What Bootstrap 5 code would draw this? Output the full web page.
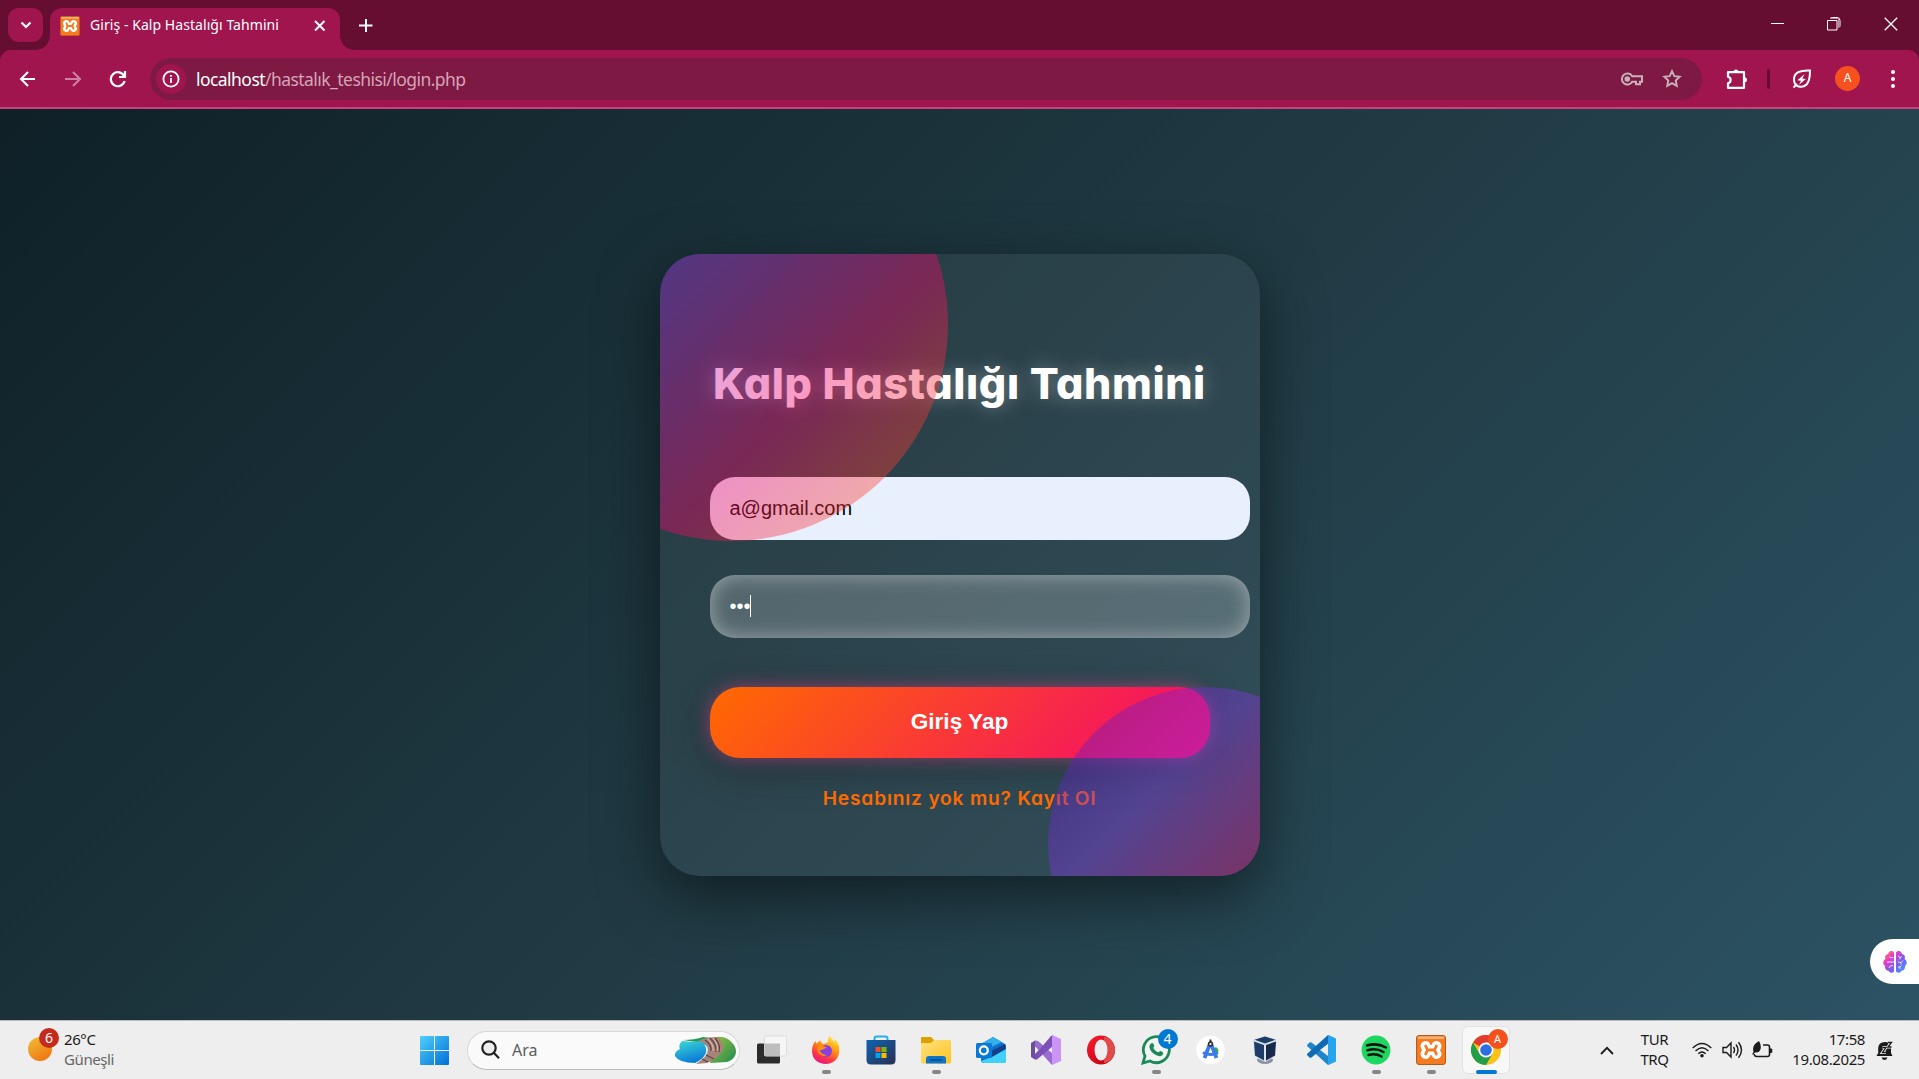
<!DOCTYPE html>
<html lang="tr">
<head>
<meta charset="utf-8">
<title>Giriş - Kalp Hastalığı Tahmini</title>
<link href="https://cdn.jsdelivr.net/npm/bootstrap@5.3.0/dist/css/bootstrap.min.css" rel="stylesheet">
<style>
html,body{height:1079px;overflow:hidden}
body{font-family:"Noto Sans","Open Sans",sans-serif;color:#1b1b1b;line-height:1.2}
svg{display:block;flex:none}
/* browser chrome */
.strip{height:50px;background:#660e32;padding-left:8px}
.tabmenu{width:35px;height:34px;border-radius:11px;background:#a1154f;margin:8px 7px 0 0}
.tab{width:290px;height:42px;margin-top:8px;background:#a1154f;border-radius:12px 12px 0 0;padding:0 14px 7px 10px;color:#fff;position:relative}
.tab::before,.tab::after{content:"";position:absolute;bottom:0;width:14px;height:14px}
.tab::before{left:-14px;background:radial-gradient(circle at 0 0,transparent 13.5px,#a1154f 14px)}
.tab::after{right:-14px;background:radial-gradient(circle at 100% 0,transparent 13.5px,#a1154f 14px)}
.tabtitle{font-size:14px;margin-left:10px;letter-spacing:.06px;white-space:nowrap}
.bar{background:#660e32;height:59px}
.barin{background:#a1154f;height:59px;border-radius:11px 11px 0 0;border-bottom:2px solid #c4447c;padding:0 17px 0 17px}
.omni{width:1552px;height:42px;border-radius:21px;background:#7d1942;padding:0 20px 0 6px;color:#fff}
.infoc{width:30px;height:30px;border-radius:50%;background:#a1154f}
.url{font-size:17.5px;margin-left:10px;white-space:nowrap;letter-spacing:-.55px;padding-top:1px}
.url span{color:#d7a3b8}
.avatar{width:25px;height:25px;border-radius:50%;background:#f4511e;color:#fff;font-size:12px}
.vsep{width:3px;height:20px;background:#660e32;border-radius:2px}
/* page */
.stage{height:911px;background:linear-gradient(135deg,#0f2027,#203a43,#2c5364);position:relative}
.panel{width:600px;height:622px;border-radius:40px;background:rgba(255,255,255,.055);box-shadow:0 20px 60px rgba(0,0,0,.5);padding:101px 50px 0;overflow:hidden;position:relative}
.orb{position:absolute;border-radius:50%;opacity:.4}
.orb-a{width:434px;height:434px;left:-146px;top:-147px;background:linear-gradient(135deg,#4a14b0,#9033ea,#f5046c,#ff6a00)}
.orb-b{width:314px;height:314px;left:388px;top:433px;background:linear-gradient(135deg,#4506ac,#8838ea,#f5046c,#ff6a00)}
.poppy{font-family:Inter,"Open Sans",sans-serif;font-feature-settings:"cv11","ss03"}
.brand{font-size:43px;font-weight:800;color:#fff;text-shadow:0 0 20px rgba(255,255,255,.35);line-height:56px;margin:0 -20px 66px;white-space:nowrap;letter-spacing:.6px}
.field{width:540px;height:63px;border-radius:25px;padding:0 20px;font:20px "Liberation Sans",sans-serif;line-height:63px;display:flex;align-items:center}
.f-mail{background:#e8f0fe;color:#000;margin-bottom:35px;border:0}
.f-pass{background:rgba(255,255,255,.2);box-shadow:inset 0 0 20px rgba(255,255,255,.42);color:#fff;margin-bottom:49px}
.caret{width:1px;height:22px;background:#fff;margin-left:-1px}
.go{height:71px;border-radius:30px;border:0;width:500px;background:linear-gradient(135deg,#ff6a00,#f5145f 85%,#f5085f);color:#fff;font:bold 22.6px "Liberation Sans",sans-serif;box-shadow:0 0 18px rgba(255,70,150,.5),0 10px 40px rgba(0,0,0,.25)}
.reg{color:#ff6a00;font-weight:600;font-size:19.2px;margin-top:28px;line-height:24px;text-decoration:none;white-space:nowrap;letter-spacing:.8px}
.brainpill{position:absolute;right:0;bottom:36px;width:49px;height:45px;border-radius:23px 0 0 23px;background:#fff;padding-left:13px}
/* taskbar */
.task{height:59px;background:#eee;border-top:1px solid #b9bcbd}
.wx{width:407px;padding-left:28px}
.sun{width:24px;height:24px;border-radius:50%;background:linear-gradient(150deg,#eec238,#f26a0c);position:relative;margin-top:-2px}
.bub{position:absolute;width:20px;height:20px;border-radius:50%;color:#fff;font-size:14px;line-height:20px;text-align:center}
.t15{font-size:15px;line-height:20px;white-space:nowrap;letter-spacing:-.4px;margin-top:-2px}
.cell{width:55px;height:58px;position:relative}
.cell i{position:absolute;left:23px;bottom:5px;width:9px;height:4px;border-radius:2px;background:#868686}
.find{width:273px;height:39px;border-radius:20px;background:#fafafa;border:1px solid #d8d8d8;border-bottom-color:#bbb;margin:0 3.5px 0 5px;padding:0 2px 0 13px}
.tile{position:absolute;left:3.5px;top:5px;width:48px;height:48px;border-radius:6px;background:#f8f8f8;border:1px solid #e2e2e2}
</style>
<script src="https://cdn.jsdelivr.net/npm/bootstrap@5.3.0/dist/js/bootstrap.bundle.min.js"></script>
</head>
<body>
<svg width="0" height="0" class="position-absolute"><defs>
<linearGradient id="win" x1="0" y1="0" x2="1" y2="1"><stop stop-color="#4fd0fb"/><stop offset="1" stop-color="#006ed6"/></linearGradient>
<linearGradient id="ff" x1=".8" y1="0" x2=".3" y2="1"><stop stop-color="#fff44f"/><stop offset=".4" stop-color="#ff980e"/><stop offset=".75" stop-color="#ff3647"/><stop offset="1" stop-color="#e31587"/></linearGradient>
<linearGradient id="st" x1="0" y1="0" x2="1" y2="1"><stop stop-color="#0f63b0"/><stop offset="1" stop-color="#273055"/></linearGradient>
<linearGradient id="fo" x1="0" y1="0" x2="1" y2="1"><stop stop-color="#ffe184"/><stop offset="1" stop-color="#ffc31c"/></linearGradient>
<linearGradient id="op" x1="0" y1="0" x2="1" y2="1"><stop stop-color="#ff1b2d"/><stop offset="1" stop-color="#b30012"/></linearGradient>
<linearGradient id="br" x1="0" y1="0" x2="1" y2="1"><stop stop-color="#ff9a3c"/><stop offset=".3" stop-color="#ea3cc4"/><stop offset=".6" stop-color="#7a5cf0"/><stop offset="1" stop-color="#2fa8ff"/></linearGradient>
<linearGradient id="sea" x1="0" y1="0" x2=".4" y2="1"><stop stop-color="#3fe0d6"/><stop offset="1" stop-color="#0b7cd6"/></linearGradient>
<linearGradient id="gr" x1="0" y1="0" x2="1" y2="1"><stop stop-color="#9cc63c"/><stop offset="1" stop-color="#1f8a52"/></linearGradient>
<symbol id="xampp" viewBox="0 0 30 30"><rect x=".5" y=".5" width="29" height="29" rx="2.5" fill="#f57a20" stroke="#b5591a"/><path d="M2 1.500h26v2.500H2z" fill="#ffb27a"/><g fill="none" stroke-linecap="round" stroke-linejoin="round"><path d="M9.500 11 11.200 15 9.500 19M20.500 11 18.800 15 20.500 19M11.200 15h7.600" stroke="#fff" stroke-width="10"/><path d="M9.700 11 11.500 15 9.700 19M20.300 11 18.500 15 20.300 19M11.500 15h7" stroke="#f57a20" stroke-width="2.800"/></g></symbol>
</defs></svg>

<header>
<div class="strip d-flex align-items-start">
 <div class="tabmenu d-flex align-items-center justify-content-center"><svg width="12" height="8" fill="none" stroke="#fff" stroke-width="2.200"><path d="M1.500 1.500 6 6l4.500-4.500"/></svg></div>
 <div class="tab d-flex align-items-center">
  <svg width="20" height="20"><use href="#xampp"/></svg>
  <span class="tabtitle">Giriş - Kalp Hastalığı Tahmini</span>
  <svg class="ms-auto" width="12" height="12" stroke="#fff" stroke-width="2"><path d="m1 1 9.500 9.500M10.500 1 1 10.500"/></svg>
 </div>
 <svg style="margin:19px 0 0 19px" width="14" height="14" stroke="#fff" stroke-width="2"><path d="M7 0v13M0 6.500h13.500"/></svg>
 <div class="ms-auto d-flex" style="padding:17px 21px 0 0;gap:43px">
  <svg width="13" height="14" stroke="#fff"><path d="M0 6.500h13"/></svg>
  <svg width="14" height="14" fill="none" stroke="#fff"><path d="M.5 3.500h9.500v9.500H.5zM3 1.500q1-1 2.500-1H10q3 0 3 3v5q0 1.500-1 2"/><path d="M3 1.500h8.500v9" stroke="#c58aa2"/></svg>
  <svg width="14" height="14" stroke="#fff" stroke-width="1.300"><path d="m.7.700 12.500 12.500M13.200.700.7 13.200"/></svg>
 </div>
</div>
<div class="bar"><div class="barin d-flex align-items-center">
 <svg width="21" height="18" fill="none" stroke="#fff" stroke-width="2.100"><path d="M18 9H5M11 2 4 9l7 7"/></svg>
 <svg width="21" height="18" fill="none" stroke="#cd7fa0" stroke-width="2.100" style="margin-left:27px"><path d="M0 9h14M8 2l7 7-7 7"/></svg>
 <svg width="18" height="18" fill="none" stroke="#fff" stroke-width="2.200" style="margin:0 23px 0 23px"><path d="M15.300 6.500A7 7 0 1 0 15.600 11M16 1v6h-6"/></svg>
 <div class="omni d-flex align-items-center">
  <div class="infoc d-flex align-items-center justify-content-center"><svg width="18" height="18" fill="none" stroke="#fff" stroke-width="1.800"><circle cx="9" cy="9" r="7.600"/><path d="M9 8v5M9 5v1.800"/></svg></div>
  <div class="url">localhost<span>/hastalık_teshisi/login.php</span></div>
  <svg class="ms-auto" width="24" height="16" fill="none" stroke="#c9b0bb" stroke-width="2"><path d="M12.200 5.300a5.500 5.500 0 1 0 0 5.400h3.800v2.500h4v-2.500h2V5.300z"/><circle cx="7.300" cy="8" r="2.800" fill="#c9b0bb" stroke="none"/></svg>
  <svg width="20" height="20" fill="none" stroke="#c9b0bb" stroke-width="1.900" style="margin-left:18px"><path d="m10 2.200 2.300 5 5.400.6-4 3.700 1.100 5.400L10 14.200l-4.800 2.700 1.100-5.400-4-3.700 5.400-.6z"/></svg>
 </div>
 <svg width="22" height="22" fill="none" stroke="#fff" stroke-width="2.200" style="margin-left:24px"><path d="M2 4.200h16v15.600H2v-4.600q2.600-.6 2.600-3.200T2 8.800z" stroke-linejoin="round"/><path d="M7.500 4a2.500 2.500 0 0 1 5 0zM18.500 9.300a2.500 2.500 0 0 1 0 5z" fill="#fff" stroke="none"/></svg>
 <div class="vsep" style="margin-left:19px"></div>
 <svg width="20" height="20" fill="none" stroke="#fff" stroke-width="2" style="margin-left:22px"><path d="M18 1.500C8 1 2 3.500 2 10.500c0 8 8.500 9 12.500 5 3-3 3.500-7 3.500-14zM5 15l-3.500 3.500"/><path d="m12.500 5-7 6.300 3.500.4-2 4 6.800-5.700-3.500-.6z" fill="#fff" stroke="none"/></svg>
 <div class="avatar d-flex align-items-center justify-content-center" style="margin-left:23px">A</div>
 <svg width="6" height="20" fill="#fff" class="ms-auto" style="margin-right:6px"><circle cx="3" cy="3" r="2"/><circle cx="3" cy="10" r="2"/><circle cx="3" cy="17" r="2"/></svg>
</div></div>
</header>

<main class="stage d-flex align-items-center justify-content-center">
 <div class="panel text-center">
  <h1 class="brand poppy">Kalp Hastalığı Tahmini</h1>
  <div class="field f-mail">a@gmail.com</div>
  <div class="field f-pass">•••<span class="caret"></span></div>
  <button class="go d-block">Giriş Yap</button>
  <a class="reg poppy d-block">Hesabınız yok mu? Kayıt Ol</a>
  <div class="orb orb-a"></div><div class="orb orb-b"></div>
 </div>
 <div class="brainpill d-flex align-items-center"><svg width="24" height="24" viewBox="0 0 24 24"><path d="M11 2.500C9 0 5.500 1 5 4 2 4.500 1.500 7 2.500 9-.5 11-.3 14.500 2 16c-.3 3 1.500 4.500 3.500 4.700C7 23.500 10 23 11 21.500zM13 2.500C15 0 18.500 1 19 4c3 .5 3.500 3 2.500 5 3 2 2.800 5.500.5 7 .3 3-1.500 4.500-3.500 4.700-1.500 2.800-4.500 2.300-5.500.8z" fill="url(#br)"/><path d="M4 12h7M6 6.500q1 2 4.500 1M6 18q0-2.500 4-2.500M15 6l2 1.500 2-1M17 7.500v2M15 12l3 .5 2-2M18 12.500v2M15 17l2 0 1.500-1.500M17 17v2" stroke="#fff" stroke-width=".8" fill="none"/></svg></div>
</main>

<footer class="task d-flex align-items-center">
 <div class="wx d-flex align-items-center">
  <div class="sun"><span class="bub" style="left:11px;top:-9px;background:#c42b1c">6</span></div>
  <div class="t15" style="margin-left:12px">26°C<br><span style="color:#666">Güneşli</span></div>
 </div>
 <div class="cell d-flex align-items-center justify-content-center"><svg width="29" height="29" fill="url(#win)"><path d="M1 0h13v14H0V1q0-1 1-1zM15 0h13q1 0 1 1v13H15zM0 15h14v14H1q-1 0-1-1zM15 15h14v13q0 1-1 1H15z"/></svg></div>
 <div class="find d-flex align-items-center">
  <svg width="20" height="20" fill="none" stroke="#222" stroke-width="2.200"><circle cx="8" cy="8" r="6.700" fill="#eee"/><path d="m12.800 12.800 5.200 5.500"/></svg>
  <span style="font-size:16px;color:#5c5c5c;margin-left:11px;padding-top:2px">Ara</span>
  <svg class="ms-auto" width="63" height="30"><path d="M40 3c8-4 18 2 21 9s-1 13-8 15l-17 1z" fill="url(#gr)"/><path d="M9 5q12 0 20-3l8 1-8 5z" fill="#1f9a57"/><path d="M8 6q14 2 22-1 6 8 2 13-4 8-11 10Q5 28 1 21q-1-4 5-7-2-4 2-8z" fill="url(#sea)"/><path d="M30 9q6 9-4 16l-6 4 4-1q11-6 11-15z" fill="#d9f5f7"/><path d="M24 6q8-4 20-4 9 10 3 16-5 6-14 10l-11 1q12-8 12-14 0-7-10-9z" fill="#a88478"/><path d="M31 5q7 5 6 11M36 3q7 7 6 14M41 3q6 7 4 14M28 24l6 3M32 20l8 4" stroke="#5e4652" stroke-width="1.300" fill="none"/><path d="M34 4q6 6 5 12M39 3q6 7 4 13" stroke="#e5c4a4" stroke-width="1" fill="none"/></svg>
 </div>
 <div class="cell d-flex align-items-center justify-content-center"><svg width="30" height="30" style="margin-left:1px"><rect x="0" y="8.500" width="23" height="20" rx="1.500" fill="#2c2c2c"/><rect x="7.500" y="1" width="22" height="20" rx="1.500" fill="#f6f6f6" stroke="#ddd"/><path d="M7.500 8.500H23V21H7.500z" fill="#bdbdbd"/></svg></div>
 <div class="cell d-flex align-items-center justify-content-center"><svg width="30" height="30"><path d="M18 1c3 2 4 4 5 6 1-1 1-2 1-3 4 4 5 9 4 14-1 7-7 11-13 11C7 29 1 24 1 16c0-4 1-8 4-10v3c2-3 4-2 4-4 1 1 1 3 3 4 2-1 4-1 5-2 0-2 0-4 1-6z" fill="url(#ff)"/><circle cx="15" cy="16" r="6" fill="#8a3fe0"/><path d="M6 12c4-2 8-1 10 1-3 0-3 2-6 2s1 5 6 5c-5 3-11-2-10-8z" fill="#ff8a16"/></svg><i></i></div>
 <div class="cell d-flex align-items-center justify-content-center"><svg width="30" height="30"><path d="M8.500 6V3.500q0-2 2-2h9q2 0 2 2V6" fill="none" stroke="#28aef0" stroke-width="2"/><path d="M.5 5h29v20q0 4.500-4.500 4.500H5Q.5 29.500.5 25z" fill="url(#st)"/><path fill="#f25022" d="M9.500 12h5v5h-5z"/><path fill="#7fba00" d="M15.500 12h5v5h-5z"/><path fill="#00a4ef" d="M9.500 18h5v5h-5z"/><path fill="#ffb900" d="M15.500 18h5v5h-5z"/></svg></div>
 <div class="cell d-flex align-items-center justify-content-center"><svg width="30" height="28"><path d="M0 2q0-1 1-1h9l3 3v4H0z" fill="#dca100"/><path d="M0 7h10l3-3h15.500q1.500 0 1.500 1.500V26q0 1.500-1.500 1.500h-27Q0 27.500 0 26z" fill="url(#fo)"/><path d="M5 27.500V23q0-3 3-3h14q3 0 3 3v4.500z" fill="#0f74c8"/><path d="M9 24h12" stroke="#064c8c" stroke-width="1.500"/></svg><i></i></div>
 <div class="cell d-flex align-items-center justify-content-center"><svg width="30" height="28"><path d="m17 1 12 7q1 .6 1 2v14q0 3-3 3H8q-3 0-3-3V8z" fill="#1070cf"/><path d="M17 1 5 8v4h8l13-6z" fill="#33b0ea"/><path d="m29 8 1 6-14 8-3-2v-4z" fill="#123f86"/><path d="M30 13v12q0 2-3 2H8q-2 0-3-2l11-4z" fill="#3fd0fb"/><rect x="0" y="7" width="16" height="15" rx="1.500" fill="#0a78d7"/><circle cx="7.800" cy="14.300" r="4" fill="none" stroke="#fff" stroke-width="2.200"/></svg></div>
 <div class="cell d-flex align-items-center justify-content-center"><svg width="30" height="30"><path d="m0 8 4-2.500L11 11v8l-7 5.500L0 22z" fill="#6a4f9c"/><path d="m4 11 4 4-4 4z" fill="#eee"/><path d="m4 5.500 3 .5 15 13v11l-2-1L4 11z" fill="#9a6bd0"/><path d="M22 0v11L6 24.500H4V20L20 1z" fill="#7d50b8"/><path d="m21 0 9 4v22l-9 4z" fill="#cb94f7"/></svg></div>
 <div class="cell d-flex align-items-center justify-content-center"><svg width="30" height="30"><ellipse cx="15" cy="15" rx="14" ry="14.500" fill="url(#op)"/><path d="M18 2c7 1 11 7 11 13s-4 12-11 13z" fill="#e14a4a"/><ellipse cx="15" cy="15" rx="6.500" ry="10.500" fill="#eee"/></svg></div>
 <div class="cell d-flex align-items-center justify-content-center"><svg width="30" height="30"><path d="M2 28l2-7A13 13 0 1 1 9 26z" fill="#f4f4f4" stroke="#1c8a57" stroke-width="2.800"/><path d="M10 8.500c1.500-1.500 2.500 0 3.200 2 .4 1-1.200 2-.8 2.500 1 2 2.600 3.400 4.600 4.300.8.400 1.500-1.600 2.400-1.200 2 1 3.600 1.500 2.400 3.400-1.500 2.200-4 2.200-7 .6-3.800-2-6-4.800-6.400-8 0-1.500.6-2.600 1.600-3.600z" fill="#1c8a57"/></svg><span class="bub" style="left:29px;top:8px;background:#0078d4">4</span><i></i></div>
 <div class="cell d-flex align-items-center justify-content-center"><svg width="30" height="30"><circle cx="14.500" cy="15" r="14.300" fill="#fff"/><path d="M20 12q4 3 1.500 6l-3 1-1-5z" fill="#34a853"/><path d="m13.500 10-5 13M15.500 10l5 13" stroke="#3d7be6" stroke-width="3.800"/><path d="M7 17.500q7.500 4 15 0" stroke="#3d7be6" stroke-width="3" fill="none"/><path d="M14.500 4.500v4" stroke="#333" stroke-width="2"/><circle cx="14.500" cy="9" r="1.900" fill="#fff" stroke="#333" stroke-width="1.600"/></svg></div>
 <div class="cell d-flex align-items-center justify-content-center"><svg width="30" height="30" style="margin-left:-3px"><ellipse cx="15" cy="25" rx="8" ry="4" fill="#8a93a3"/><path d="m15 .5 12 4-1.500 17L15 27 4 21.500 3 4.500z" fill="#dbe3ec"/><path d="m15 1.500 10.500 3.300L15 8.500 4.500 4.800z" fill="#1c3d63"/><path d="m4 6.500 10 3.500v15.500l-9-5z" fill="#1d3c69"/><path d="M26 6.500 16 10v15.500l9-5z" fill="#16294a"/></svg></div>
 <div class="cell d-flex align-items-center justify-content-center"><svg width="30" height="30"><path d="M22 0 30 4v22l-8 4L1.500 11.500q-1-1 0-2l2-2q1-.7 2 0L22 20z" fill="#1c85cc"/><path d="M22 0 1.500 18.500q-1 1 0 2l2 2q1 .7 2 0L22 9z" fill="#0f6cb4"/><path d="m22 0 7 3q1 .5 1 1.500v21q0 1-1 1.500l-7 3z" fill="#27a4ee"/><path d="m22 9-8 6 8 6z" fill="#eee"/></svg></div>
 <div class="cell d-flex align-items-center justify-content-center"><svg width="30" height="30"><circle cx="15" cy="15" r="14.400" fill="#1ed760"/><path d="M6 10.500q10-3 19 2M6.500 15.300q9-2.500 16 1.700M7.500 20q7-2 13 1.500" fill="none" stroke="#121212" stroke-width="2.500" stroke-linecap="round"/></svg><i></i></div>
 <div class="cell d-flex align-items-center justify-content-center"><svg width="30" height="30"><use href="#xampp"/></svg><i></i></div>
 <div class="cell d-flex align-items-center justify-content-center"><div class="tile"></div><svg class="position-relative" width="30" height="30"><circle cx="15" cy="15" r="15" fill="#fbc116"/><path d="M15 15 2 7.500A15 15 0 0 1 28 7.500H15z" fill="#e33b2e"/><path d="M2 7.500A15 15 0 0 0 15 30l6.500-11.200L15 15 8.500 18.700z" fill="#229e4b"/><circle cx="15" cy="15" r="7.500" fill="#fff"/><circle cx="15" cy="15" r="5.800" fill="#2c6fe4"/></svg><span class="bub" style="left:29px;top:8px;background:#f4511e;font-size:11px">A</span><i style="left:17px;width:21px;background:#0078d4"></i></div>

 <div class="ms-auto d-flex align-items-center" style="padding-right:26px">
  <svg width="14" height="9" fill="none" stroke="#1b1b1b" stroke-width="1.800"><path d="m1 8 6-6.200L13 8"/></svg>
  <div class="t15 text-center" style="margin-left:26px;width:29px">TUR<br>TRQ</div>
  <svg width="20" height="16" fill="none" stroke="#1b1b1b" stroke-width="1.400" style="margin-left:23px"><path d="M.7 6q9.300-9 18.600 0M3.500 9q6.500-6.500 13 0M6.300 11.700q3.700-3.600 7.400 0"/><circle cx="10" cy="13.800" r="1.800" fill="#1b1b1b" stroke="none"/></svg>
  <svg width="21" height="18" fill="none" stroke="#1b1b1b" stroke-width="1.400" style="margin-left:10px"><path d="M1 6.500h3.500L9 2v14l-4.500-4.500H1zM11.500 6q2 3 0 6M14 3.500q4 5.500 0 11M16.500 1.200q6 7.800 0 15.600"/></svg>
  <svg width="21" height="18" fill="none" stroke="#1b1b1b" stroke-width="1.600" style="margin-left:9px"><path d="M11 4h4.500q2 0 2 2v7.500q0 2-2 2h-11q-2 0-2.300-2.500"/><path d="M18 8h1.800v3.500H18z" fill="#1b1b1b" stroke-width="1"/><path d="M7 0q2 3 1.800 7Q8 12 3 11.500l-2 2.200L.2 13l1.300-2Q-.5 4 7 0z" fill="#1b1b1b" stroke="none"/></svg>
  <div class="t15 text-end" style="margin-left:19px;width:73px">17:58<br>19.08.2025</div>
  <svg width="17" height="19" style="margin-left:11px"><path d="M2.200 12V7Q2.500 1 9 1q5 0 6 5v6l1.500 3H.5zM5.500 16.500h6q-1 2.500-3 2.500t-3-2.500z" fill="#1b1b1b"/><path d="M6.500 6.500h3.500l-3.500 5h3.500M12 1.500h3.500l-3.500 4.500h3.500" fill="none" stroke="#eee" stroke-width="3"/><path d="M6.500 6.500h3.500l-3.500 5h3.500M12 1.500h3.500l-3.500 4.500h3.500" fill="none" stroke="#1b1b1b" stroke-width="1.300"/></svg>
 </div>
</footer>
</body>
</html>
